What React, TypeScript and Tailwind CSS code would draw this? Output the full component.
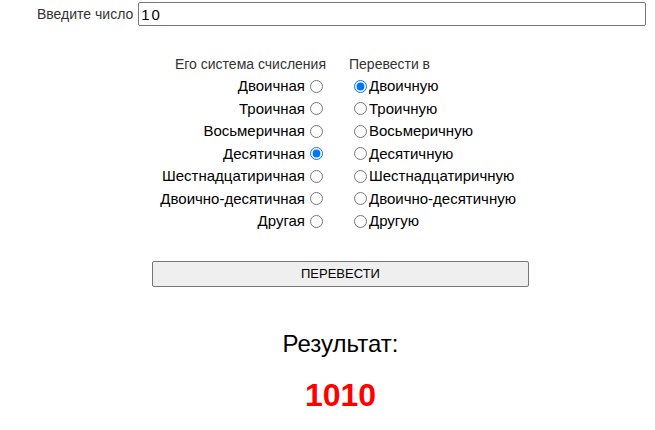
import React from "react";

const systems = [
  ["Двоичная", "Двоичную"],
  ["Троичная", "Троичную"],
  ["Восьмеричная", "Восьмеричную"],
  ["Десятичная", "Десятичную"],
  ["Шестнадцатиричная", "Шестнадцатиричную"],
  ["Двоично-десятичная", "Двоично-десятичную"],
  ["Другая", "Другую"],
];

export default function App() {
  return (
    <div className="min-h-[430px] bg-white font-['Liberation_Sans',Arial,sans-serif] text-[14px] text-black">
      <div className="flex items-center pl-[37px] pt-[2px] pr-[9px]">
        <label className="text-[#333]">Введите число</label>
        <input
          defaultValue="10"
          className="ml-[5px] h-[24px] flex-1 rounded-[2px] border border-[#767676] px-[2px] text-[15px] tracking-[2px] outline-none"
        />
      </div>

      <div className="mt-[27px] flex">
        <div className="flex w-[326px] flex-col items-end">
          <div className="h-[22px] leading-[22px] text-[#333]">Его система счисления</div>
          {systems.map(([from], i) => (
            <label key={from} className="flex h-[22.5px] items-center text-[15px]">
              <span>{from}</span>
              <input
                type="radio"
                name="from"
                defaultChecked={i === 3}
                className="ml-[5px] mr-[3px] h-[13px] w-[13px]"
              />
            </label>
          ))}
        </div>
        <div className="ml-[23px] flex flex-col items-start">
          <div className="h-[22px] leading-[22px] text-[#333]">Перевести в</div>
          {systems.map(([, to], i) => (
            <label key={to} className="flex h-[22.5px] items-center text-[15px]">
              <input
                type="radio"
                name="to"
                defaultChecked={i === 0}
                className="ml-[5px] mr-[2px] h-[13px] w-[13px]"
              />
              <span>{to}</span>
            </label>
          ))}
        </div>
      </div>

      <div className="mt-[28px] pl-[152px]">
        <button className="h-[26px] w-[377px] rounded-[2px] border border-[#767676] bg-[#efefef] text-[13px]">
          ПЕРЕВЕСТИ
        </button>
      </div>

      <div className="mt-[42px] pl-[26px] text-center text-[24px] leading-[30px]">Результат:</div>
      <div className="mt-[18px] pl-[26px] text-center text-[32px] font-bold leading-[36px] text-[#ff0000]">
        1010
      </div>
    </div>
  );
}
